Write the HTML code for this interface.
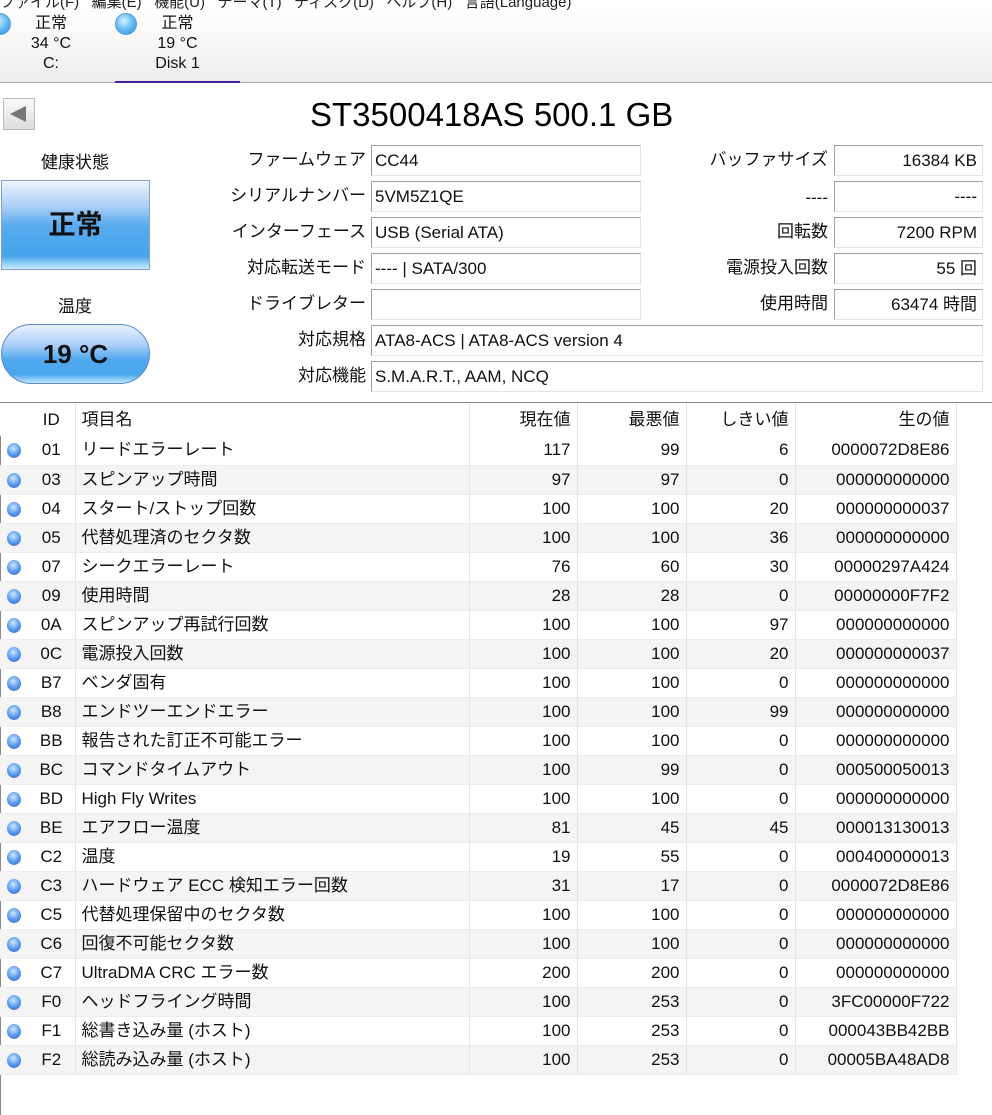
<!DOCTYPE html>
<html><head><meta charset="utf-8"><style>
*{margin:0;padding:0;box-sizing:border-box}
body{width:992px;height:1115px;background:#fff;font-family:"Liberation Sans","Noto Sans CJK JP",sans-serif;color:#111;position:relative;overflow:hidden;font-size:17px}
.a{position:absolute;white-space:nowrap}
.menu{left:0;top:-9px;font-size:15px;color:#222}
.tabs{left:0;top:10px;width:992px;height:73px;background:linear-gradient(#fff,#ececec);border-bottom:1px solid #aaa}
.dot{position:absolute;width:22px;height:22px;border-radius:50%;background:radial-gradient(circle at 40% 35%,#d8f0ff 0%,#6cc0f4 45%,#2a8ee0 100%);border:1px solid #5a9ad0}
.tt{text-align:center;font-size:16px;line-height:20px}
.lbl{text-align:right;font-size:17px;line-height:24px}
.box{position:absolute;height:31px;border-top:1px solid #a0a0a0;border-left:1px solid #a0a0a0;border-right:1px solid #e4e4e4;border-bottom:1px solid #e4e4e4;font-size:17px;line-height:29px;padding:0 3px;white-space:nowrap}
.r{text-align:right;padding-right:5px}
table{position:absolute;left:0;top:403px;border-collapse:collapse;font-size:17px;table-layout:fixed}
.frame{position:absolute;left:0;top:402px;width:992px;height:713px;border-top:1px solid #888;border-left:1px solid #888}
td,th{height:29px;line-height:28px;padding:0 6px;font-weight:normal;white-space:nowrap;border-right:1px solid #e4e4e4;border-bottom:1px solid #ececec;vertical-align:middle}
td span.t,th span.t{display:inline-block;line-height:28px;vertical-align:top}
tr:nth-child(odd) td{background:#f4f4f4}
tr.h th{background:#fff;border-bottom:none;height:33px}
td.b,th.b{border-right:none;width:28px;padding:0;text-align:center}
td.id{text-align:center;padding:0}
.bd{display:inline-block;width:14px;height:15px;border-radius:50%;background:radial-gradient(circle at 45% 35%,#cfe6ff 0%,#5b9cf0 50%,#2c5fc8 100%);vertical-align:middle}
.num{text-align:right}
</style></head><body>
<div class="a menu">ファイル(F)&nbsp;&nbsp;&nbsp;編集(E)&nbsp;&nbsp;&nbsp;機能(U)&nbsp;&nbsp;&nbsp;テーマ(T)&nbsp;&nbsp;&nbsp;ディスク(D)&nbsp;&nbsp;&nbsp;ヘルプ(H)&nbsp;&nbsp;&nbsp;言語(Language)</div>
<div class="a tabs"></div>
<div class="dot" style="left:-11px;top:13px"></div>
<div class="a tt" style="left:20px;top:14px;width:62px">正常<br>34 °C<br>C:</div>
<div class="dot" style="left:115px;top:13px"></div>
<div class="a tt" style="left:140px;top:14px;width:75px">正常<br>19 °C<br>Disk 1</div>
<div class="a" style="left:115px;top:81px;width:125px;height:2px;background:#4b1f9a"></div>

<div class="a" style="left:3px;top:98px;width:32px;height:32px;border:1px solid #bbb;background:linear-gradient(#fafafa,#ddd)"></div>
<div class="a" style="left:10px;top:106px;width:0;height:0;border-top:8px solid transparent;border-bottom:8px solid transparent;border-right:16px solid #777"></div>
<div class="a" style="left:310px;top:96px;font-size:33px;color:#000">ST3500418AS 500.1 GB</div>

<div class="a" style="left:0;top:148px;width:150px;text-align:center">健康状態</div>
<div class="a" style="left:1px;top:180px;width:149px;height:90px;border:1px solid #8aa0c8;background:linear-gradient(#eef4ff 0%,#a8cdf6 30%,#59acef 50%,#45a4ea 85%,#c8ecff 100%);text-align:center;line-height:88px;font-size:27px;font-weight:bold;color:#111">正常</div>
<div class="a" style="left:0;top:292px;width:150px;text-align:center">温度</div>
<div class="a" style="left:1px;top:324px;width:149px;height:60px;border:1px solid #5a8ad0;border-radius:30px;background:linear-gradient(#e9f2ff 0%,#a9cdf7 35%,#4ea8ee 60%,#4aa6ec 85%,#bfe8ff 100%);text-align:center;line-height:58px;font-size:26px;font-weight:bold;color:#111">19 °C</div>

<div class="a lbl" style="right:626px;top:148px">ファームウェア</div>
<div class="a lbl" style="right:626px;top:184px">シリアルナンバー</div>
<div class="a lbl" style="right:626px;top:220px">インターフェース</div>
<div class="a lbl" style="right:626px;top:256px">対応転送モード</div>
<div class="a lbl" style="right:626px;top:292px">ドライブレター</div>
<div class="a lbl" style="right:626px;top:328px">対応規格</div>
<div class="a lbl" style="right:626px;top:364px">対応機能</div>
<div class="box" style="left:371px;top:145px;width:270px">CC44</div>
<div class="box" style="left:371px;top:181px;width:270px">5VM5Z1QE</div>
<div class="box" style="left:371px;top:217px;width:270px">USB (Serial ATA)</div>
<div class="box" style="left:371px;top:253px;width:270px">---- | SATA/300</div>
<div class="box" style="left:371px;top:289px;width:270px"></div>
<div class="box" style="left:371px;top:325px;width:612px">ATA8-ACS | ATA8-ACS version 4</div>
<div class="box" style="left:371px;top:361px;width:612px">S.M.A.R.T., AAM, NCQ</div>

<div class="a lbl" style="right:164px;top:148px">バッファサイズ</div>
<div class="a lbl" style="right:164px;top:186px">----</div>
<div class="a lbl" style="right:164px;top:220px">回転数</div>
<div class="a lbl" style="right:164px;top:256px">電源投入回数</div>
<div class="a lbl" style="right:164px;top:292px">使用時間</div>
<div class="box r" style="left:834px;top:145px;width:149px">16384 KB</div>
<div class="box r" style="left:834px;top:181px;width:149px">----</div>
<div class="box r" style="left:834px;top:217px;width:149px">7200 RPM</div>
<div class="box r" style="left:834px;top:253px;width:149px">55 回</div>
<div class="box r" style="left:834px;top:289px;width:149px">63474 時間</div>

<div class="frame"></div>
<table>
<colgroup><col style="width:28px"><col style="width:47px"><col style="width:394px"><col style="width:108px"><col style="width:109px"><col style="width:109px"><col style="width:161px"></colgroup>
<tr class="h"><th class="b"></th><th style="text-align:center;padding:0">ID</th><th style="text-align:left">項目名</th><th class="num">現在値</th><th class="num">最悪値</th><th class="num">しきい値</th><th class="num">生の値</th></tr>
<tr><td class="b"><span class="bd"></span></td><td class="id">01</td><td>リードエラーレート</td><td class="num">117</td><td class="num">99</td><td class="num">6</td><td class="num">0000072D8E86</td></tr>
<tr><td class="b"><span class="bd"></span></td><td class="id">03</td><td>スピンアップ時間</td><td class="num">97</td><td class="num">97</td><td class="num">0</td><td class="num">000000000000</td></tr>
<tr><td class="b"><span class="bd"></span></td><td class="id">04</td><td>スタート/ストップ回数</td><td class="num">100</td><td class="num">100</td><td class="num">20</td><td class="num">000000000037</td></tr>
<tr><td class="b"><span class="bd"></span></td><td class="id">05</td><td>代替処理済のセクタ数</td><td class="num">100</td><td class="num">100</td><td class="num">36</td><td class="num">000000000000</td></tr>
<tr><td class="b"><span class="bd"></span></td><td class="id">07</td><td>シークエラーレート</td><td class="num">76</td><td class="num">60</td><td class="num">30</td><td class="num">00000297A424</td></tr>
<tr><td class="b"><span class="bd"></span></td><td class="id">09</td><td>使用時間</td><td class="num">28</td><td class="num">28</td><td class="num">0</td><td class="num">00000000F7F2</td></tr>
<tr><td class="b"><span class="bd"></span></td><td class="id">0A</td><td>スピンアップ再試行回数</td><td class="num">100</td><td class="num">100</td><td class="num">97</td><td class="num">000000000000</td></tr>
<tr><td class="b"><span class="bd"></span></td><td class="id">0C</td><td>電源投入回数</td><td class="num">100</td><td class="num">100</td><td class="num">20</td><td class="num">000000000037</td></tr>
<tr><td class="b"><span class="bd"></span></td><td class="id">B7</td><td>ベンダ固有</td><td class="num">100</td><td class="num">100</td><td class="num">0</td><td class="num">000000000000</td></tr>
<tr><td class="b"><span class="bd"></span></td><td class="id">B8</td><td>エンドツーエンドエラー</td><td class="num">100</td><td class="num">100</td><td class="num">99</td><td class="num">000000000000</td></tr>
<tr><td class="b"><span class="bd"></span></td><td class="id">BB</td><td>報告された訂正不可能エラー</td><td class="num">100</td><td class="num">100</td><td class="num">0</td><td class="num">000000000000</td></tr>
<tr><td class="b"><span class="bd"></span></td><td class="id">BC</td><td>コマンドタイムアウト</td><td class="num">100</td><td class="num">99</td><td class="num">0</td><td class="num">000500050013</td></tr>
<tr><td class="b"><span class="bd"></span></td><td class="id">BD</td><td>High Fly Writes</td><td class="num">100</td><td class="num">100</td><td class="num">0</td><td class="num">000000000000</td></tr>
<tr><td class="b"><span class="bd"></span></td><td class="id">BE</td><td>エアフロー温度</td><td class="num">81</td><td class="num">45</td><td class="num">45</td><td class="num">000013130013</td></tr>
<tr><td class="b"><span class="bd"></span></td><td class="id">C2</td><td>温度</td><td class="num">19</td><td class="num">55</td><td class="num">0</td><td class="num">000400000013</td></tr>
<tr><td class="b"><span class="bd"></span></td><td class="id">C3</td><td>ハードウェア ECC 検知エラー回数</td><td class="num">31</td><td class="num">17</td><td class="num">0</td><td class="num">0000072D8E86</td></tr>
<tr><td class="b"><span class="bd"></span></td><td class="id">C5</td><td>代替処理保留中のセクタ数</td><td class="num">100</td><td class="num">100</td><td class="num">0</td><td class="num">000000000000</td></tr>
<tr><td class="b"><span class="bd"></span></td><td class="id">C6</td><td>回復不可能セクタ数</td><td class="num">100</td><td class="num">100</td><td class="num">0</td><td class="num">000000000000</td></tr>
<tr><td class="b"><span class="bd"></span></td><td class="id">C7</td><td>UltraDMA CRC エラー数</td><td class="num">200</td><td class="num">200</td><td class="num">0</td><td class="num">000000000000</td></tr>
<tr><td class="b"><span class="bd"></span></td><td class="id">F0</td><td>ヘッドフライング時間</td><td class="num">100</td><td class="num">253</td><td class="num">0</td><td class="num">3FC00000F722</td></tr>
<tr><td class="b"><span class="bd"></span></td><td class="id">F1</td><td>総書き込み量 (ホスト)</td><td class="num">100</td><td class="num">253</td><td class="num">0</td><td class="num">000043BB42BB</td></tr>
<tr><td class="b"><span class="bd"></span></td><td class="id">F2</td><td>総読み込み量 (ホスト)</td><td class="num">100</td><td class="num">253</td><td class="num">0</td><td class="num">00005BA48AD8</td></tr>
</table>
</body></html>
